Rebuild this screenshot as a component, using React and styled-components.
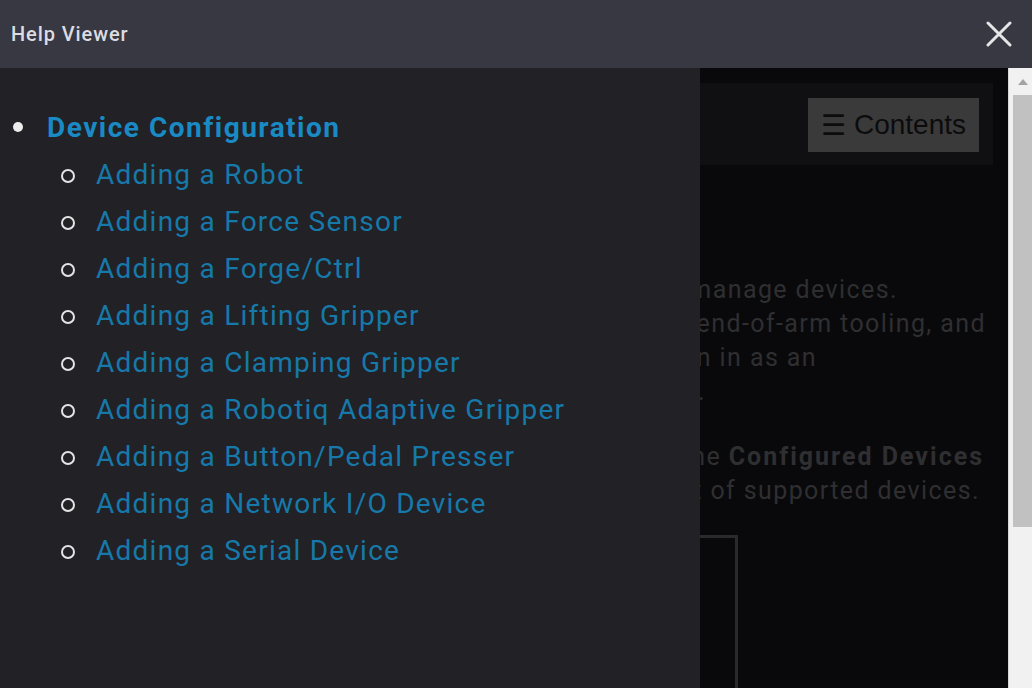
import React from "react";
import styled, { createGlobalStyle } from "styled-components";

const Global = createGlobalStyle`
  html, body { margin: 0; padding: 0; background: #373841; }
  * { box-sizing: border-box; }
  #root { width: 1032px; height: 688px; }
`;

const Window = styled.div`
  width: 1032px;
  height: 688px;
  display: flex;
  flex-direction: column;
  overflow: hidden;
  font-family: Roboto, "Noto Sans", sans-serif;
`;

const TitleBar = styled.div`
  height: 68px;
  flex: 0 0 68px;
  background: #373841;
  display: flex;
  align-items: center;
  justify-content: space-between;
  padding: 0 18px 0 11px;
`;

const Title = styled.span`
  color: #dcdde2;
  font-size: 20px;
  font-weight: 500;
  letter-spacing: 0.9px;
`;

const CloseButton = styled.button`
  width: 30px;
  height: 30px;
  padding: 0;
  border: 0;
  background: transparent;
  display: flex;
  align-items: center;
  justify-content: center;
  cursor: pointer;
`;

const Body = styled.div`
  flex: 1;
  display: flex;
  position: relative;
  min-height: 0;
`;

const Frame = styled.div`
  flex: 1;
  background: #09090b;
  overflow: hidden;
  padding: 15px 15px 0 15px;
  display: flex;
  flex-direction: column;
`;

const PageHeader = styled.div`
  height: 82px;
  flex: 0 0 82px;
  background: #101012;
  display: flex;
  align-items: flex-start;
  justify-content: flex-end;
  padding: 15px 14px 0 0;
`;

const ContentsButton = styled.div`
  width: 171px;
  height: 54px;
  background: #3a3a3b;
  color: #0c0c0d;
  font-family: "Liberation Sans", Arial, sans-serif;
  font-size: 28px;
  display: flex;
  align-items: center;
  justify-content: center;
  gap: 8px;
`;

const Paragraph = styled.div`
  margin-top: ${(p) => p.$top}px;
  color: #2f2f31;
  font-size: 25px;
  letter-spacing: 1.4px;
  line-height: 34px;
  white-space: nowrap;
`;

const Line = styled.div`
  text-align: right;
  padding-right: ${(p) => p.$end}px;
`;

const Strong = styled.b`
  font-weight: 700;
  letter-spacing: 2px;
`;

const Figure = styled.div`
  margin-top: 27px;
  width: 723px;
  height: 200px;
  border: 3px solid #2a2a2b;
  border-left-color: transparent;
  flex: 0 0 auto;
`;

const Scrollbar = styled.div`
  width: 24px;
  flex: 0 0 24px;
  background: #f1f1f1;
  border-left: 1px solid #d8d8d8;
  display: flex;
  flex-direction: column;
  align-items: flex-end;
`;

const ArrowUp = styled.div`
  width: 100%;
  height: 27px;
  display: flex;
  align-items: center;
  justify-content: center;
  padding-left: 4px;
`;

const Thumb = styled.div`
  width: 19px;
  height: 432px;
  background: #c1c1c1;
`;

const NavPanel = styled.nav`
  position: absolute;
  left: 0;
  top: 0;
  bottom: 0;
  width: 700px;
  background: #212126;
  padding-top: 36px;
`;

const TopList = styled.ul`
  list-style: none;
  margin: 0;
  padding: 0;
  font-size: 28px;
  line-height: 47px;
`;

const TopItem = styled.li`
  position: relative;
  padding-left: 47px;
  &::before {
    content: "";
    position: absolute;
    left: 13px;
    top: 18px;
    width: 10px;
    height: 10px;
    border-radius: 50%;
    background: #ececec;
  }
`;

const SubList = styled.ul`
  list-style: none;
  margin: 0;
  padding: 0;
`;

const SubItem = styled.li`
  position: relative;
  padding-left: 96px;
  margin-left: -47px;
  height: 47px;
  &::before {
    content: "";
    position: absolute;
    left: 61px;
    top: 18px;
    width: 10px;
    height: 10px;
    border-radius: 50%;
    border: 2px solid #e4e4e4;
  }
`;

const NavLink = styled.a`
  text-decoration: none;
  color: ${(p) => (p.$main ? "#1a8ac4" : "#1779a9")};
  font-weight: ${(p) => (p.$main ? 700 : 400)};
  letter-spacing: ${(p) => (p.$main ? "1.5px" : "1.25px")};
  white-space: nowrap;
`;

const items = [
  "Adding a Robot",
  "Adding a Force Sensor",
  "Adding a Forge/Ctrl",
  "Adding a Lifting Gripper",
  "Adding a Clamping Gripper",
  "Adding a Robotiq Adaptive Gripper",
  "Adding a Button/Pedal Presser",
  "Adding a Network I/O Device",
  "Adding a Serial Device",
];

export default function App() {
  return (
    <>
      <Global />
      <Window>
        <TitleBar>
          <Title>Help Viewer</Title>
          <CloseButton aria-label="Close">
            <svg width="26" height="26" viewBox="0 0 26 26">
              <path d="M2 2 L24 24 M24 2 L2 24" stroke="#e6e6e8" strokeWidth="3" strokeLinecap="round" />
            </svg>
          </CloseButton>
        </TitleBar>
        <Body>
          <Frame>
            <PageHeader>
              <ContentsButton>
                <span>☰</span>
                <span>Contents</span>
              </ContentsButton>
            </PageHeader>
            <Paragraph $top={108}>
              <Line $end={95}>nd manage devices.</Line>
              <Line $end={7}>rs, end-of-arm tooling, and</Line>
              <Line $end={176}>ed in in as an</Line>
              <Line $end={287}>ell.</Line>
            </Paragraph>
            <Paragraph $top={31}>
              <Line $end={9}>n the <Strong>Configured Devices</Strong></Line>
              <Line $end={13}>st of supported devices.</Line>
            </Paragraph>
            <Figure />
          </Frame>
          <Scrollbar>
            <ArrowUp>
              <svg width="10" height="6" viewBox="0 0 10 6">
                <path d="M0 6 L5 0 L10 6 Z" fill="#a3a3a3" />
              </svg>
            </ArrowUp>
            <Thumb />
          </Scrollbar>
          <NavPanel>
            <TopList>
              <TopItem>
                <NavLink href="#" $main>Device Configuration</NavLink>
                <SubList>
                  {items.map((t) => (
                    <SubItem key={t}>
                      <NavLink href="#">{t}</NavLink>
                    </SubItem>
                  ))}
                </SubList>
              </TopItem>
            </TopList>
          </NavPanel>
        </Body>
      </Window>
    </>
  );
}
